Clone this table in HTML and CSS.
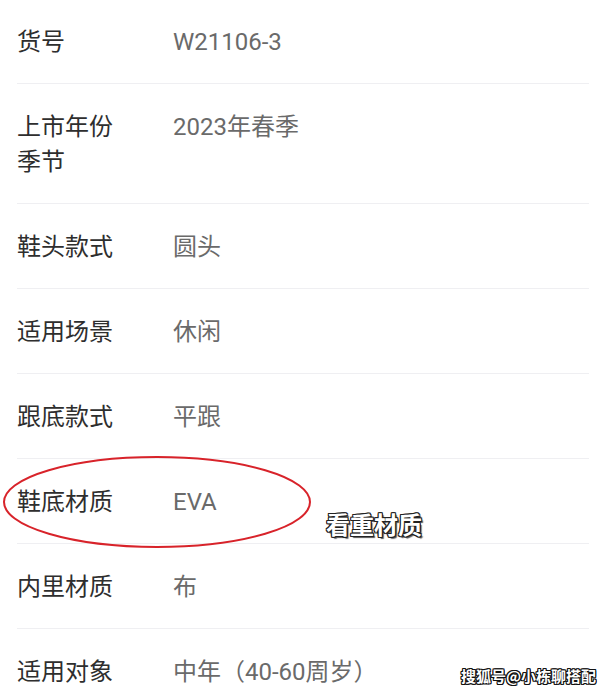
FILE: index.html
```html
<!DOCTYPE html>
<html lang="zh">
<head>
<meta charset="utf-8">
<link rel="stylesheet" href="styles.css">
</head>
<body>
<div class="page">
  <div class="list">
    <div class="row first"><div class="label">货号</div><div class="value">W21106-3</div></div>
    <div class="row"><div class="label">上市年份<br>季节</div><div class="value">2023年春季</div></div>
    <div class="row"><div class="label">鞋头款式</div><div class="value">圆头</div></div>
    <div class="row"><div class="label">适用场景</div><div class="value">休闲</div></div>
    <div class="row"><div class="label">跟底款式</div><div class="value">平跟</div></div>
    <div class="row"><div class="label">鞋底材质</div><div class="value">EVA</div></div>
    <div class="row"><div class="label">内里材质</div><div class="value">布</div></div>
    <div class="row last"><div class="label">适用对象</div><div class="value">中年（40-60周岁）</div></div>
  </div>
  <svg class="circle" width="312" height="96" viewBox="0 0 312 96"><ellipse cx="156" cy="48" rx="153" ry="45" fill="none" stroke="#d8232a" stroke-width="2"/></svg>
  <div class="note">看重材质</div>
  <div class="mark">搜狐号@小栋聊搭配</div>
</div>
</body>
</html>
```
FILE: styles.css
```css
html, body {
  margin: 0;
  padding: 0;
  background: #ffffff;
}
.page {
  position: relative;
  width: 615px;
  height: 695px;
  overflow: hidden;
  font-family: Roboto, "Noto Sans CJK SC", sans-serif;
}
.list {
  display: flex;
  flex-direction: column;
  margin-left: 17px;
  width: 572px;
}
.row {
  display: flex;
  align-items: flex-start;
  padding: 26px 0 23px;
  border-bottom: 1px solid #efeff2;
  font-size: 24px;
  line-height: 35px;
}
.row.first {
  padding-top: 25px;
  padding-bottom: 23px;
}
.row.last {
  border-bottom: none;
}
.label {
  width: 156px;
  flex: none;
  color: #2e2e2e;
}
.value {
  color: #6a6a6a;
}
.circle {
  position: absolute;
  left: 1px;
  top: 454px;
}
.note {
  position: absolute;
  left: 326px;
  top: 506px;
  font-family: "Noto Sans CJK SC", sans-serif;
  font-size: 24px;
  line-height: 36px;
  font-weight: 700;
  color: #ffffff;
  text-shadow: -1px -1px 0 #222, 1px -1px 0 #222, -1px 1px 0 #222, 1px 1px 0 #222, 0 1px 0 #222, 0 -1px 0 #222, 1px 0 0 #222, -1px 0 0 #222, 2px 2px 1px #555;
}
.mark {
  position: absolute;
  left: 461px;
  top: 665px;
  font-family: "Noto Sans CJK SC", sans-serif;
  font-size: 15px;
  line-height: 22px;
  font-weight: 700;
  color: #ffffff;
  text-shadow: -1px -1px 0 #111, 1px -1px 0 #111, -1px 1px 0 #111, 1px 1px 0 #111, 0 1px 0 #111, 0 -1px 0 #111, 1px 0 0 #111, -1px 0 0 #111;
}
```
